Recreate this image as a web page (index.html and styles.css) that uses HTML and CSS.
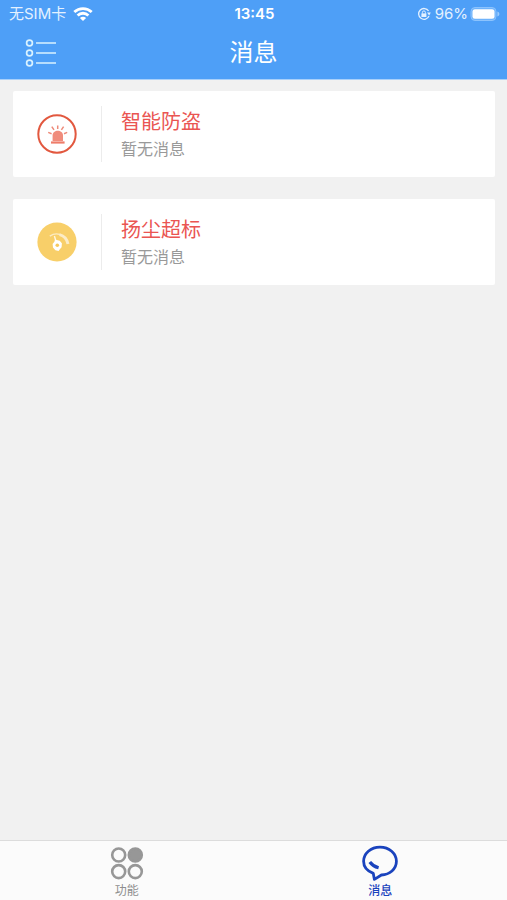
FILE: index.html
```html
<!DOCTYPE html>
<html lang="zh-CN">
<head>
  <meta charset="UTF-8" />
  <meta name="viewport" content="width=device-width, initial-scale=1.0" />
  <title>消息</title>
  <link rel="stylesheet" href="styles.css">
</head>
<body>
  <header class="header">
    <!-- 状态栏 -->
    <div class="status">
      <div class="status-left">
        <span>无SIM卡</span>
        <svg width="20" height="14" viewBox="0 0 20 14" fill="none" stroke="#fff" stroke-width="2.8">
          <path d="M1.3 5C6.1.4 13.9.4 18.7 5" />
          <path d="M4.6 8.5C7.6 5.5 12.4 5.5 15.4 8.5" />
          <path d="M10 14L6.9 10.9C8.7 9.3 11.3 9.3 13.1 10.9Z" fill="#fff" stroke="none" />
        </svg>
      </div>
      <span class="time">13:45</span>
      <div class="status-right">
        <svg class="lock" width="14" height="14" viewBox="0 0 14 14" fill="none" stroke="#e4f1ff" stroke-width="1.3">
          <path d="M11.6 4A5.4 5.4 0 1 0 12 9" />
          <path d="M10 5.6L13.8 5.6L12.2 8.4Z" fill="#e4f1ff" stroke="none" />
          <rect x="4.4" y="6.4" width="5" height="3.6" fill="#e4f1ff" stroke="none" />
          <path d="M5.4 6.6V5.4a1.5 1.5 0 0 1 3 0V6.6" stroke-width="1" />
        </svg>
        <span>96%</span>
        <svg width="30" height="14" viewBox="0 0 30 14">
          <rect x="1" y=".5" width="25" height="13" rx="4" fill="#6fb3fb" stroke="#8cc3fd" />
          <rect x="2.5" y="2.3" width="22" height="9.4" rx="2.5" fill="#fff" />
          <path d="M27.4 4.5C30 5.4 30 8.6 27.4 9.5Z" fill="#9bcbfd" />
        </svg>
      </div>
    </div>
    <!-- 标题栏 -->
    <div class="navbar">
      <button class="menu-btn" type="button" aria-label="菜单">
        <svg width="32" height="30" viewBox="0 0 32 30" fill="none" stroke="#d9f2ff" stroke-width="1.7">
          <circle cx="4.5" cy="5" r="2.9" />
          <circle cx="4.5" cy="15" r="2.9" />
          <circle cx="4.5" cy="25" r="2.9" />
          <path d="M11 5H31M11 15H31M11 25H31" />
        </svg>
      </button>
      <h1>消息</h1>
    </div>
  </header>

  <main class="list">
    <a class="card" href="#">
      <span class="card-icon">
        <svg width="40" height="40" viewBox="0 0 40 40">
          <circle cx="20" cy="20" r="18.7" fill="#fff" stroke="#e2583f" stroke-width="2" />
          <path d="M15.6 27V21.5C15.6 15.2 26 15.2 26 21.5V27Z" fill="#f08c7c" />
          <path d="M14 27.4H27.6V29.6H14Z" fill="#ee7c69" />
          <path d="M20.7 11.4V15M14.8 12.6L17 15.8M26.6 12.6L24.4 15.8M11.2 18.4L14.6 19.7M30.2 18.4L27 19.7" stroke="#ee8a79" stroke-width="1.5" />
        </svg>
      </span>
      <span class="card-text">
        <strong>智能防盗</strong>
        <small>暂无消息</small>
      </span>
    </a>
    <a class="card" href="#">
      <span class="card-icon">
        <svg width="40" height="40" viewBox="0 0 40 40">
          <circle cx="20" cy="20" r="19.6" fill="#f8cf69" />
          <path d="M12.8 14.2C17 11.3 22 11.4 25.6 14" fill="none" stroke="#fcebc2" stroke-width="1.4" />
          <path d="M22.5 12.6C27 13.7 30 17.2 31 22" fill="none" stroke="#fcecc6" stroke-width="3" />
          <path d="M17.4 14L19 19.4" stroke="#fff6e0" stroke-width="1.4" />
          <path d="M18 17.4L22.7 18.7L24.9 21.3L24.6 25.2L22.8 27.2L21.6 29L18.4 28.2L16 25.6L15.6 22L17.4 19.8Z" fill="#fff" />
          <circle cx="20.3" cy="23.2" r="1.8" fill="#f6c95f" />
        </svg>
      </span>
      <span class="card-text">
        <strong>扬尘超标</strong>
        <small>暂无消息</small>
      </span>
    </a>
  </main>

  <!-- 底部导航 -->
  <nav class="tabbar">
    <a class="tab" href="#">
      <svg width="36" height="36" viewBox="0 0 36 36" fill="none" stroke="#979797" stroke-width="2.6">
        <circle cx="9.7" cy="10" r="6.5" />
        <circle cx="26.3" cy="10" r="6.5" fill="#979797" />
        <circle cx="9.7" cy="26.6" r="6.5" />
        <circle cx="26.3" cy="26.6" r="6.5" />
      </svg>
      <span>功能</span>
    </a>
    <a class="tab active" href="#">
      <svg width="36" height="36" viewBox="0 0 36 36" fill="none" stroke="#1a43bd" stroke-width="2.8" stroke-linejoin="round">
        <path d="M11.3 28.4C5.5 26.2 1.6 21.8 1.6 16.3C1.6 8.4 8.8 2.1 18 2.1S34.4 8.4 34.4 16.3S27.6 29.6 19.4 30L12.4 34.4Z" />
        <path d="M7.8 17C9.8 19.8 12.8 21.8 16.6 22.8" stroke-width="3.2" />
      </svg>
      <span>消息</span>
    </a>
  </nav>
</body>
</html>
```

FILE: styles.css
```css
* {
  box-sizing: border-box;
}
body {
  margin: 0;
  min-height: 100vh;
  display: flex;
  flex-direction: column;
  background: #f1f1f1;
  font-family: Inter, "Noto Sans CJK SC", sans-serif;
}
svg {
  display: block;
  flex-shrink: 0;
}
a {
  text-decoration: none;
}
.header {
  background: #4e9ff7;
  color: #fff;
  border-bottom: 1px solid #a9d0fa;
}
/* 状态栏 */
.status {
  display: grid;
  grid-template-columns: 1fr auto 1fr;
  align-items: center;
  height: 28px;
  padding: 0 7px 0 9px;
  font-size: 15px;
  line-height: 28px;
  color: #e4f1ff;
}
.status-left,
.status-right {
  display: flex;
  align-items: center;
  gap: 7px;
}
.status-right {
  justify-content: flex-end;
  gap: 2px;
}
.lock {
  margin-right: 2px;
}
.time {
  font-weight: 600;
  color: #fff;
}
/* 标题栏 */
.navbar {
  display: grid;
  grid-template-columns: 1fr auto 1fr;
  align-items: center;
  height: 51px;
  padding: 0 25px 2px;
}
.menu-btn {
  justify-self: start;
  padding: 0;
  border: 0;
  background: none;
  cursor: pointer;
}
.navbar h1 {
  margin: 0;
  font-size: 24px;
  line-height: 48px;
  font-weight: 400;
}
/* 消息列表 */
.list {
  flex: 1;
  display: flex;
  flex-direction: column;
  gap: 22px;
  padding: 11px 12px 22px 13px;
}
.card {
  display: flex;
  align-items: center;
  padding: 15px 0;
  background: #fff;
  border-radius: 2px;
}
.card-icon {
  display: flex;
  align-items: center;
  height: 56px;
  padding: 0 24px;
  border-right: 1px solid #ececec;
}
.card-text {
  display: flex;
  flex-direction: column;
  padding-left: 19px;
}
.card-text strong {
  font-size: 20px;
  line-height: 30px;
  font-weight: 400;
  color: #ea5552;
}
.card-text small {
  font-size: 16px;
  line-height: 24px;
  color: #999;
}
/* 底部导航 */
.tabbar {
  display: flex;
  height: 60px;
  padding-top: 4px;
  background: #fbfbfb;
  border-top: 1px solid #dcdcdc;
}
.tab {
  flex: 1;
  display: flex;
  flex-direction: column;
  align-items: center;
  gap: 1px;
  font-size: 12px;
  line-height: 18px;
  color: #8e8e8e;
}
.tab.active {
  color: #1a43bd;
  font-weight: 500;
}
```
